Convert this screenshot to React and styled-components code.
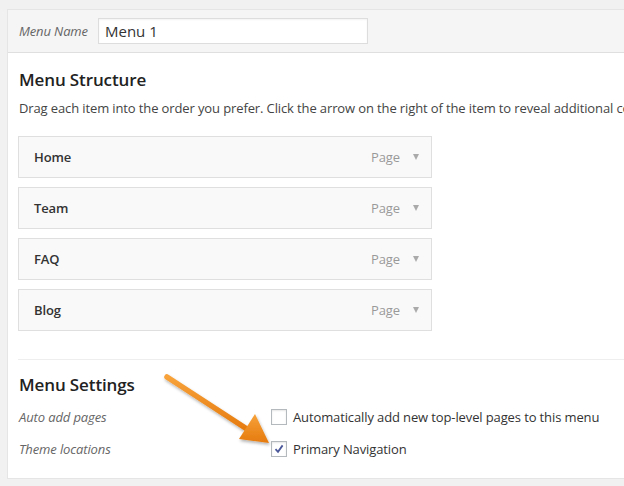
import React from 'react'
import styled, { createGlobalStyle } from 'styled-components'

const GlobalStyle = createGlobalStyle`
  html, body {
    margin: 0;
    padding: 0;
    background: #f1f1f1;
    overflow: hidden;
  }
  body {
    font-family: "Open Sans", "Noto Sans", sans-serif;
    font-size: 13px;
    letter-spacing: -0.12px;
    color: #444;
  }
`

const Page = styled.div`
  position: relative;
  width: 624px;
  height: 486px;
  padding: 9px 0 0 7px;
  box-sizing: border-box;
  overflow: hidden;
`

const Panel = styled.div`
  width: 720px;
  border: 1px solid #e5e5e5;
  border-right: none;
  background: #fff;
`

const Header = styled.div`
  display: flex;
  align-items: center;
  height: 42px;
  padding: 0 11px;
  background: #f5f5f5;
  border-bottom: 1px solid #dfdfdf;
`

const NameLabel = styled.label`
  font-style: italic;
  color: #666;
  width: 79px;
`

const NameInput = styled.input`
  width: 270px;
  height: 26px;
  box-sizing: border-box;
  border: 1px solid #ddd;
  box-shadow: inset 0 1px 2px rgba(0, 0, 0, 0.05);
  background: #fff;
  padding: 0 6px;
  font-family: inherit;
  font-size: 15px;
  color: #333;
  outline: none;
`

const Body = styled.div`
  padding: 15px 0 0 10px;
`

const SectionTitle = styled.h3`
  margin: 0 0 0 1px;
  font-size: 17px;
  line-height: 24px;
  font-weight: 600;
  color: #222;
`

const Description = styled.p`
  margin: 6px 0 18px 1px;
  line-height: 20px;
  white-space: nowrap;
  overflow: hidden;
  color: #444;
`

const ItemList = styled.ul`
  list-style: none;
  margin: 0;
  padding: 0;
  display: flex;
  flex-direction: column;
  gap: 9px;
`

const Item = styled.li`
  width: 414px;
  height: 42px;
  box-sizing: border-box;
  display: flex;
  align-items: center;
  padding: 0 12px 0 15px;
  background: #f9f9f9;
  border: 1px solid #dfdfdf;
`

const ItemTitle = styled.span`
  flex: 1;
  font-weight: 600;
  color: #333;
`

const ItemType = styled.span`
  color: #999;
  margin-right: 13px;
`

const Caret = styled.span`
  width: 0;
  height: 0;
  border-left: 3.5px solid transparent;
  border-right: 3.5px solid transparent;
  border-top: 6px solid #aaa;
`

const Settings = styled.div`
  margin-top: 28px;
  padding: 13px 0 13px 0;
  border-top: 1px solid #eee;
`

const SettingRow = styled.div`
  display: flex;
  align-items: center;
  height: 32px;
  margin-top: ${p => (p.$first ? '4px' : '0')};
`

const RowLabel = styled.span`
  width: 252px;
  padding-left: 1px;
  font-style: italic;
  color: #666;
`

const CheckLabel = styled.label`
  display: flex;
  align-items: center;
  gap: 6px;
  color: #333;
`

const Box = styled.span`
  width: 16px;
  height: 16px;
  box-sizing: border-box;
  border: 1px solid #b4b9be;
  background: #fff;
  box-shadow: inset 0 1px 2px rgba(0, 0, 0, 0.1);
  display: flex;
  align-items: center;
  justify-content: center;
`

const Arrow = styled.svg`
  position: absolute;
  left: 0;
  top: 0;
  pointer-events: none;
`

const Checkbox = ({ checked, children }) => (
  <CheckLabel>
    <Box>
      {checked && (
        <svg width="12" height="12" viewBox="0 0 12 12">
          <path d="M2.5 6.2 L5 8.8 L9.6 2.4" fill="none" stroke="#4a5799" strokeWidth="1.8" />
        </svg>
      )}
    </Box>
    {children}
  </CheckLabel>
)

const items = ['Home', 'Team', 'FAQ', 'Blog']

export default function App() {
  return (
    <Page>
      <GlobalStyle />
      <Panel>
        <Header>
          <NameLabel>Menu Name</NameLabel>
          <NameInput defaultValue="Menu 1" />
        </Header>
        <Body>
          <SectionTitle>Menu Structure</SectionTitle>
          <Description>
            Drag each item into the order you prefer. Click the arrow on the right of the item to reveal additional configuration options.
          </Description>
          <ItemList>
            {items.map(name => (
              <Item key={name}>
                <ItemTitle>{name}</ItemTitle>
                <ItemType>Page</ItemType>
                <Caret />
              </Item>
            ))}
          </ItemList>
          <Settings>
            <SectionTitle>Menu Settings</SectionTitle>
            <SettingRow $first>
              <RowLabel>Auto add pages</RowLabel>
              <Checkbox>Automatically add new top-level pages to this menu</Checkbox>
            </SettingRow>
            <SettingRow>
              <RowLabel>Theme locations</RowLabel>
              <Checkbox checked>Primary Navigation</Checkbox>
            </SettingRow>
          </Settings>
        </Body>
      </Panel>
      <Arrow width="624" height="486" viewBox="0 0 624 486">
        <defs>
          <linearGradient id="orange" x1="0" y1="0" x2="0" y2="1">
            <stop offset="0" stopColor="#f7a23a" />
            <stop offset="1" stopColor="#e57a0e" />
          </linearGradient>
          <filter id="shadow" x="-20%" y="-20%" width="140%" height="140%">
            <feDropShadow dx="1" dy="2" stdDeviation="1.5" floodColor="#000" floodOpacity="0.3" />
          </filter>
        </defs>
        <g filter="url(#shadow)">
          <line x1="167" y1="377" x2="250" y2="431" stroke="url(#orange)" strokeWidth="5.5" strokeLinecap="round" />
          <polygon points="269,443 239,439 255,414" fill="url(#orange)" />
        </g>
      </Arrow>
    </Page>
  )
}
